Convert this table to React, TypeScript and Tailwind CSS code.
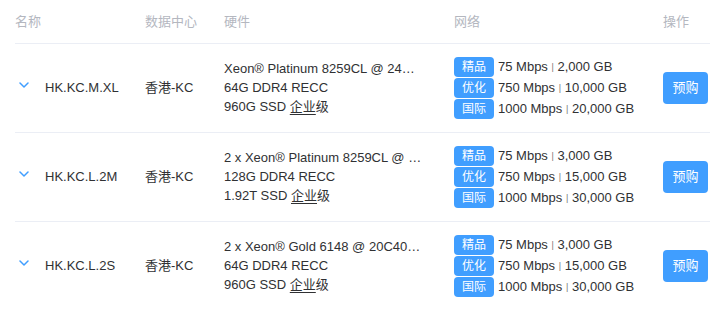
import React from 'react';

const rows = [
  {
    name: 'HK.KC.M.XL',
    dc: '香港-KC',
    cpu: 'Xeon® Platinum 8259CL @ 24C48T 2.5GHz',
    ram: '64G DDR4 RECC',
    disk: '960G SSD',
    net: ['2,000 GB', '10,000 GB', '20,000 GB'],
  },
  {
    name: 'HK.KC.L.2M',
    dc: '香港-KC',
    cpu: '2 x Xeon® Platinum 8259CL @ 24C48T 2.5GHz',
    ram: '128G DDR4 RECC',
    disk: '1.92T SSD',
    net: ['3,000 GB', '15,000 GB', '30,000 GB'],
  },
  {
    name: 'HK.KC.L.2S',
    dc: '香港-KC',
    cpu: '2 x Xeon® Gold 6148 @ 20C40T 2.4GHz',
    ram: '64G DDR4 RECC',
    disk: '960G SSD',
    net: ['3,000 GB', '15,000 GB', '30,000 GB'],
  },
];

const lines = [
  { tag: '精品', speed: '75 Mbps' },
  { tag: '优化', speed: '750 Mbps' },
  { tag: '国际', speed: '1000 Mbps' },
];

const Chevron = () => (
  <svg width="10" height="6" viewBox="0 0 10 6" fill="none" className="-mt-[7px] shrink-0">
    <polyline points="1,1 5,5 9,1" stroke="#409eff" strokeWidth="1.5" strokeLinecap="round" strokeLinejoin="round" />
  </svg>
);

const App = () => {
  return (
    <div
      className="w-[727px] h-[309px] bg-white overflow-hidden pl-[15px]"
      style={{ fontFamily: '"Liberation Sans", Arial, "Noto Sans CJK SC", sans-serif' }}
    >
      <div className="w-[695px]">
        {/* Header */}
        <div className="grid grid-cols-[130px_79px_230px_209px_47px] h-[44px] items-center text-[13px] text-[#b4b7bf] border-b border-[#ebeef5]">
          <div>名称</div>
          <div>数据中心</div>
          <div>硬件</div>
          <div>网络</div>
          <div>操作</div>
        </div>

        {rows.map((row) => (
          <div
            key={row.name}
            className="grid grid-cols-[130px_79px_230px_209px_47px] h-[89px] items-center text-[13px] text-[#303133] border-b border-[#ebeef5]"
          >
            <div className="flex items-center pl-[4px] gap-[16px]">
              <Chevron />
              <span>{row.name}</span>
            </div>
            <div>{row.dc}</div>
            <div className="leading-[19px] -mt-[1px]">
              <div className="w-[199px] truncate">{row.cpu}</div>
              <div>{row.ram}</div>
              <div>
                {row.disk}{' '}
                <span className="underline underline-offset-[3px] decoration-[#303133]">企业</span>级
              </div>
            </div>
            <div className="flex flex-col gap-[1px]">
              {lines.map((l, i) => (
                <div key={l.tag} className="flex items-center h-[20px]">
                  <span className="w-[40px] h-[20px] rounded-[4px] bg-[#409eff] text-white text-[12px] flex items-center justify-center mr-[4px]">
                    {l.tag}
                  </span>
                  <span>
                    {l.speed} <span className="text-[9px] text-[#777] align-middle">|</span> {row.net[i]}
                  </span>
                </div>
              ))}
            </div>
            <div>
              <button className="w-[45px] h-[32px] rounded-[4px] bg-[#409eff] text-white text-[13px] flex items-center justify-center">
                预购
              </button>
            </div>
          </div>
        ))}
      </div>
    </div>
  );
};

export default App;
